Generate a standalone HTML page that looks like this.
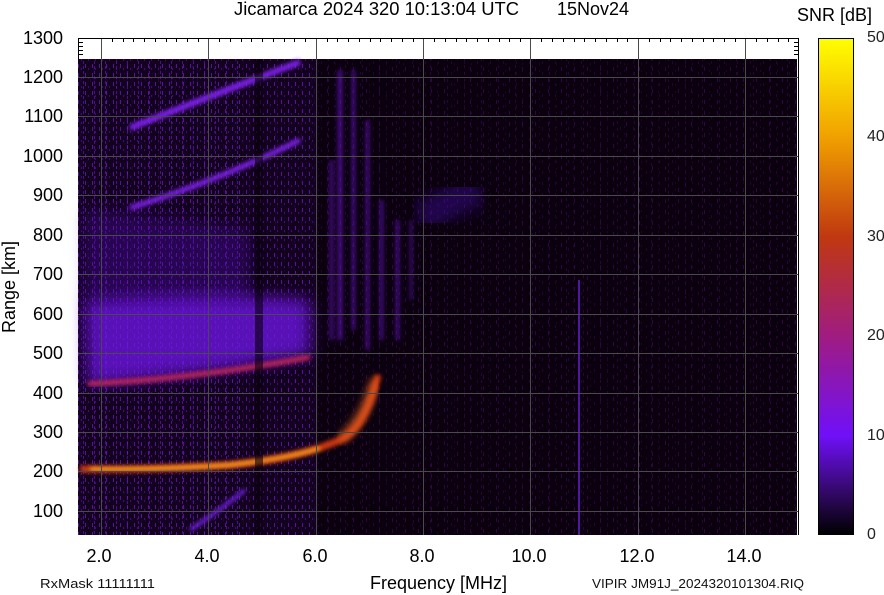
<!DOCTYPE html>
<html><head><style>
body{margin:0;background:#fff;width:884px;height:595px;overflow:hidden;font-family:"Liberation Sans",sans-serif}
svg{position:absolute;left:0;top:0}
</style></head><body>
<svg width="884" height="595" viewBox="0 0 884 595" xmlns="http://www.w3.org/2000/svg">
<defs>
<filter id="b2"><feGaussianBlur stdDeviation="2"/></filter>
<filter id="b4"><feGaussianBlur stdDeviation="4"/></filter>
<filter id="b8"><feGaussianBlur stdDeviation="8"/></filter>
<linearGradient id="cb" x1="0" y1="0" x2="0" y2="1">
<stop offset="0" stop-color="#ffff00"/>
<stop offset="0.2" stop-color="#f0a000"/>
<stop offset="0.4" stop-color="#c03810"/>
<stop offset="0.6" stop-color="#a01c80"/>
<stop offset="0.8" stop-color="#7010f8"/>
<stop offset="0.92" stop-color="#300860"/>
<stop offset="1" stop-color="#000000"/>
</linearGradient>
<pattern id="p1" width="13" height="11" patternUnits="userSpaceOnUse">
<rect x="2" y="1" width="1" height="4" fill="#3a0a58"/>
<rect x="9" y="6" width="1" height="3" fill="#2a0640"/>
</pattern>
<pattern id="p2" width="17" height="7" patternUnits="userSpaceOnUse">
<rect x="5" y="2" width="1" height="3" fill="#300848"/>
<rect x="12" y="0" width="1" height="2" fill="#240538"/>
</pattern>
<pattern id="sp1" width="7" height="9" patternUnits="userSpaceOnUse">
<rect x="1" y="1" width="1" height="4" fill="#8020e8"/>
<rect x="4" y="5" width="1" height="2" fill="#6010b8"/>
</pattern>
<pattern id="sp2" width="11" height="5" patternUnits="userSpaceOnUse">
<rect x="6" y="1" width="1" height="3" fill="#7018d0"/>
</pattern>
</defs>
<rect x="78" y="38" width="721" height="497" fill="#fff"/>
<rect x="78" y="59" width="719" height="476" fill="#0a000e"/>
<rect x="78" y="59" width="719" height="476" fill="url(#p1)" opacity="0.7"/>
<rect x="78" y="59" width="719" height="476" fill="url(#p2)" opacity="0.7"/>
<rect x="78" y="59" width="240" height="476" fill="#180428" opacity="0.6"/>
<rect x="78" y="59" width="240" height="476" fill="url(#sp1)" opacity="0.6"/>
<rect x="78" y="59" width="170" height="476" fill="url(#sp2)" opacity="0.6"/>
<g>
<path d="M85 300 Q200 290 310 300 L310 355 Q200 375 88 385Z" fill="#7018e8" filter="url(#b8)" opacity="0.75"/>
<path d="M85 210 Q180 220 250 230 L250 300 Q170 300 85 300Z" fill="#5010b0" filter="url(#b8)" opacity="0.35"/>
<path d="M88 384 Q200 378 310 357" stroke="#c02858" stroke-width="5" fill="none" filter="url(#b2)"/>
<path d="M80 469 Q150 470 230 465 Q300 458 340 440 Q365 430 378 375" stroke="#d03810" stroke-width="7" fill="none" filter="url(#b2)"/>
<path d="M90 469 Q150 470 230 465 Q290 458 320 448" stroke="#ffc020" stroke-width="3" fill="none" filter="url(#b2)"/>
<path d="M340 440 Q365 420 375 380" stroke="#e06020" stroke-width="10" fill="none" filter="url(#b4)" opacity="0.7"/>
<path d="M130 128 Q200 100 300 62" stroke="#8020f0" stroke-width="6" fill="none" filter="url(#b2)"/>
<path d="M130 208 Q220 180 300 140" stroke="#8020f0" stroke-width="5" fill="none" filter="url(#b2)"/>
<path d="M338 70 h4 v270 h-4z M352 70 h3 v260 h-3z M366 120 h3 v230 h-3z M380 200 h3 v140 h-3z M396 220 h3 v120 h-3z M410 220 h2 v80 h-2z M330 160 h3 v180 h-3z" fill="#7018d8" filter="url(#b2)" opacity="0.7"/>
<path d="M420 220 Q450 200 480 190" stroke="#4010a0" stroke-width="30" fill="none" filter="url(#b8)" opacity="0.45"/>
<path d="M83 517 L220 517" stroke="#6018c0" stroke-width="8" fill="none" filter="url(#b4)"/>
<path d="M190 530 Q220 510 245 490" stroke="#7020e0" stroke-width="4" fill="none" filter="url(#b2)"/>
<rect x="255" y="59" width="8" height="476" fill="#08000c" opacity="0.6"/>
<rect x="578" y="280" width="2" height="255" fill="#5018a0"/>
</g>
<g stroke="#4a4a4a" stroke-width="1">
<line x1="101.5" y1="38" x2="101.5" y2="535"/><line x1="208.5" y1="38" x2="208.5" y2="535"/><line x1="316.5" y1="38" x2="316.5" y2="535"/><line x1="423.5" y1="38" x2="423.5" y2="535"/><line x1="530.5" y1="38" x2="530.5" y2="535"/><line x1="638.5" y1="38" x2="638.5" y2="535"/><line x1="745.5" y1="38" x2="745.5" y2="535"/>
<line x1="78" y1="77.5" x2="799" y2="77.5"/><line x1="78" y1="116.5" x2="799" y2="116.5"/><line x1="78" y1="156.5" x2="799" y2="156.5"/><line x1="78" y1="195.5" x2="799" y2="195.5"/><line x1="78" y1="235.5" x2="799" y2="235.5"/><line x1="78" y1="274.5" x2="799" y2="274.5"/><line x1="78" y1="314.5" x2="799" y2="314.5"/><line x1="78" y1="353.5" x2="799" y2="353.5"/><line x1="78" y1="393.5" x2="799" y2="393.5"/><line x1="78" y1="432.5" x2="799" y2="432.5"/><line x1="78" y1="471.5" x2="799" y2="471.5"/><line x1="78" y1="511.5" x2="799" y2="511.5"/>
</g>
<g stroke="#000" stroke-width="1">
<line x1="78" y1="38.5" x2="799" y2="38.5"/><line x1="78.5" y1="38" x2="78.5" y2="59"/><line x1="798.5" y1="38" x2="798.5" y2="535"/>
<path d="M112.5 38v4M123.5 38v4M133.5 38v4M144.5 38v4M155.5 38v4M166.5 38v4M176.5 38v4M187.5 38v4M198.5 38v4M219.5 38v4M230.5 38v4M241.5 38v4M251.5 38v4M262.5 38v4M273.5 38v4M284.5 38v4M294.5 38v4M305.5 38v4M327.5 38v4M337.5 38v4M348.5 38v4M359.5 38v4M370.5 38v4M380.5 38v4M391.5 38v4M402.5 38v4M413.5 38v4M434.5 38v4M445.5 38v4M456.5 38v4M466.5 38v4M477.5 38v4M488.5 38v4M499.5 38v4M509.5 38v4M520.5 38v4M541.5 38v4M552.5 38v4M563.5 38v4M574.5 38v4M584.5 38v4M595.5 38v4M606.5 38v4M617.5 38v4M627.5 38v4M649.5 38v4M660.5 38v4M670.5 38v4M681.5 38v4M692.5 38v4M703.5 38v4M713.5 38v4M724.5 38v4M735.5 38v4M756.5 38v4M767.5 38v4M778.5 38v4M788.5 38v4"/>
<path d="M78 42.5h5M78 46.5h5M78 50.5h5M78 54.5h5M794 42.5h5M794 46.5h5M794 50.5h5M794 54.5h5"/>
</g>
<rect x="818.5" y="38.5" width="35" height="496" fill="url(#cb)" stroke="#000"/>
<g font-size="18" fill="#000">
<text x="234" y="15" textLength="285" lengthAdjust="spacingAndGlyphs">Jicamarca 2024 320 10:13:04 UTC</text>
<text x="557" y="15">15Nov24</text>
<text x="797" y="21">SNR [dB]</text>
<g text-anchor="end">
<text x="63" y="44">1300</text><text x="63" y="83">1200</text><text x="63" y="122">1100</text><text x="63" y="162">1000</text><text x="63" y="201">900</text><text x="63" y="241">800</text><text x="63" y="280">700</text><text x="63" y="320">600</text><text x="63" y="359">500</text><text x="63" y="399">400</text><text x="63" y="438">300</text><text x="63" y="477">200</text><text x="63" y="517">100</text>
</g>
<g text-anchor="middle">
<text x="99" y="562">2.0</text><text x="207" y="562">4.0</text><text x="315" y="562">6.0</text><text x="422" y="562">8.0</text><text x="529" y="562">10.0</text><text x="637" y="562">12.0</text><text x="744" y="562">14.0</text>
</g>
<text x="370" y="589">Frequency [MHz]</text>
<text transform="translate(15 287) rotate(-90)" text-anchor="middle">Range [km]</text>
<g fill="#222" font-size="16"><text x="867" y="42">50</text><text x="867" y="141">40</text><text x="867" y="241">30</text><text x="867" y="340">20</text><text x="867" y="440">10</text><text x="867" y="539">0</text></g>
<text x="40" y="588" font-size="13" fill="#111" textLength="115" lengthAdjust="spacingAndGlyphs">RxMask 11111111</text>
<text x="592" y="588" font-size="13" fill="#111" textLength="212" lengthAdjust="spacingAndGlyphs">VIPIR  JM91J_2024320101304.RIQ</text>
</g>
</svg>
</body></html>
